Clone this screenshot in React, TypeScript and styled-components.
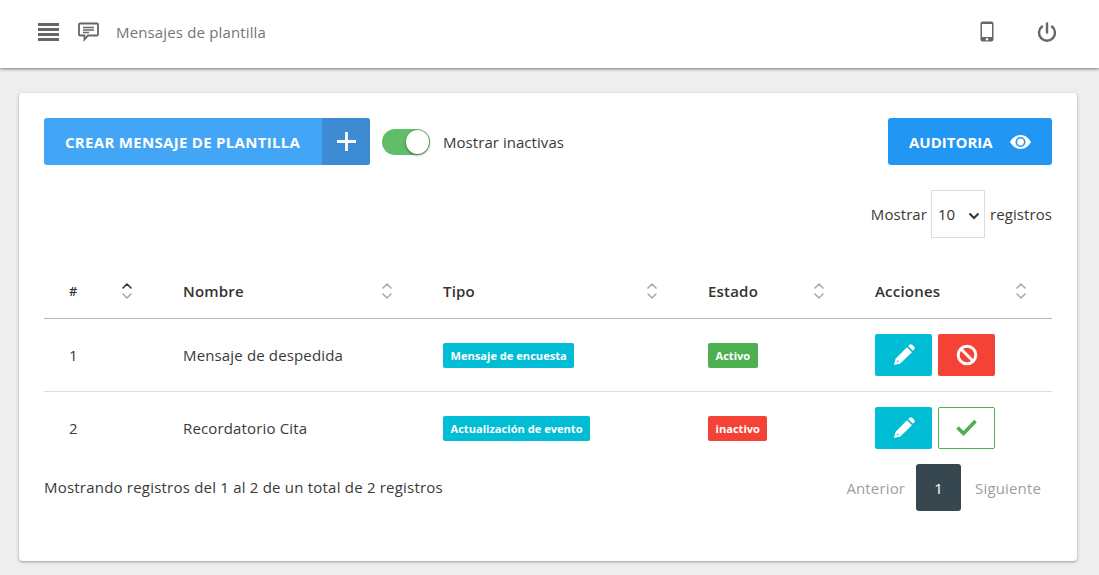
import React from "react";
import styled, { createGlobalStyle } from "styled-components";

const Global = createGlobalStyle`
  html, body { margin: 0; padding: 0; background: #eeeeee; }
  body { font-family: "Open Sans", "Noto Sans", sans-serif; font-size: 15px; color: #333; }
  * { box-sizing: border-box; }
`;

const Page = styled.div`
  width: 1099px;
  height: 575px;
  overflow: hidden;
  background: #eeeeee;
`;
const Header = styled.header`
  height: 68px;
  background: #fff;
  box-shadow: 0 1px 3px rgba(0, 0, 0, 0.5);
  display: flex;
  align-items: center;
  padding: 0 42px 0 38px;
  color: #666;
`;
const HeaderTitle = styled.span`
  font-size: 15px;
  letter-spacing: 0.15px;
  color: #757575;
  margin: -4px 0 0 17px;
  flex: 1;
`;
const IconSlot = styled.span<{ $ml?: number }>`
  display: inline-flex;
  margin-left: ${(p) => p.$ml ?? 0}px;
  margin-top: -5px;
`;
const Card = styled.main`
  margin: 25px 22px 0 19px;
  height: 468px;
  background: #fff;
  border-radius: 4px;
  box-shadow: 0 1px 3px rgba(0, 0, 0, 0.35);
  padding: 25px;
`;
const TopRow = styled.div`
  display: flex;
  align-items: center;
  height: 47px;
`;
const Button = styled.button<{ $bg: string }>`
  height: 47px;
  border: 0;
  border-radius: 3px;
  background: ${(p) => p.$bg};
  color: #fff;
  font: 700 15px "Open Sans", sans-serif;
  display: flex;
  align-items: center;
  padding: 0;
  overflow: hidden;
`;
const ButtonLabel = styled.span`
  width: 278px;
  padding-left: 21px;
  letter-spacing: 0.3px;
  text-align: left;
`;
const PlusBox = styled.span`
  width: 48px;
  height: 47px;
  background: #3d8bd3;
  display: flex;
  align-items: center;
  justify-content: center;
`;
const Toggle = styled.span`
  width: 48px;
  height: 26px;
  border-radius: 13px;
  background: #62bd69;
  margin-left: 12px;
  position: relative;
  display: inline-block;
`;
const Knob = styled.span`
  position: absolute;
  right: 1px;
  top: 1px;
  width: 23px;
  height: 24px;
  border-radius: 50%;
  background: #fff;
  box-shadow: 0 1px 3px rgba(0, 0, 0, 0.45);
`;
const ToggleLabel = styled.span`
  margin-left: 13px;
  font-size: 15px;
  letter-spacing: 0.05px;
  color: #3a3a3a;
  flex: 1;
`;
const AuditBtn = styled(Button)`
  width: 164px;
  justify-content: flex-start;
  padding-left: 21px;
  gap: 17px;
`;
const LengthRow = styled.div`
  display: flex;
  justify-content: flex-end;
  align-items: center;
  gap: 4px;
  margin-top: 25px;
  height: 48px;
  font-size: 15px;
  letter-spacing: 0.08px;
  color: #3a3a3a;
`;
const Select = styled.select`
  width: 54px;
  height: 48px;
  margin-right: 1px;
  appearance: none;
  background: #fff url("data:image/svg+xml,%3Csvg xmlns='http://www.w3.org/2000/svg' width='12' height='8' viewBox='0 0 12 8'%3E%3Cpath d='M1.500 1.500L6 6l4.500-4.500' fill='none' stroke='%23333' stroke-width='2'/%3E%3C/svg%3E") no-repeat 36px 21px;
  border: 1px solid #dddddd;
  border-radius: 0;
  font: 15px "Open Sans", sans-serif;
  color: #333;
  padding: 0 0 0 6px;
`;
const Table = styled.table`
  width: 1008px;
  margin-top: 25px;
  border-collapse: collapse;
  table-layout: fixed;
`;
const Col = styled.col<{ $w: number }>`
  width: ${(p) => p.$w}px;
`;
const Th = styled.th`
  height: 55px;
  padding: 2px 0 0 25px;
  text-align: left;
  font-weight: 600;
  color: #333;
  border-bottom: 1px solid #b5b5b5;
`;
const ThInner = styled.div<{ $small?: boolean }>`
  display: flex;
  align-items: center;
  justify-content: space-between;
  padding-right: 25px;
  font-size: ${(p) => (p.$small ? "13px" : "15px")};
  letter-spacing: 0.2px;
`;
const Td = styled.td`
  height: 73px;
  padding: 0 0 0 25px;
  font-size: 15px;
  letter-spacing: 0.15px;
  color: #3a3a3a;
  border-bottom: 1px solid #dddddd;
  tr:last-child > & {
    border-bottom: 0;
  }
`;
const Badge = styled.span<{ $bg: string }>`
  display: block;
  width: fit-content;
  margin-top: 1px;
  background: ${(p) => p.$bg};
  color: #fff;
  font-size: 11.1px;
  letter-spacing: 0;
  font-weight: 700;
  line-height: 25px;
  height: 25px;
  padding: 0 7.5px;
  border-radius: 2px;
`;
const Actions = styled.div`
  display: flex;
  gap: 6px;
`;
const ActionBtn = styled.button<{ $bg: string; $border?: string }>`
  width: 57px;
  height: 42px;
  border-radius: 2px;
  background: ${(p) => p.$bg};
  border: ${(p) => (p.$border ? `1px solid ${p.$border}` : "0")};
  display: flex;
  align-items: center;
  justify-content: center;
  padding: 0;
`;
const Footer = styled.div`
  display: flex;
  justify-content: space-between;
  align-items: flex-start;
`;
const Info = styled.div`
  font-size: 15px;
  letter-spacing: 0.21px;
  color: #3a3a3a;
  padding-top: 13px;
`;
const Pager = styled.div`
  display: flex;
  align-items: center;
  height: 47px;
  font-size: 15px;
  letter-spacing: 0.15px;
  color: #9e9e9e;
  padding-right: 11px;
`;
const PageNum = styled.span`
  width: 45px;
  height: 47px;
  margin: 0 14px 0 11px;
  background: #37474f;
  color: #fff;
  border-radius: 3px;
  display: flex;
  align-items: center;
  justify-content: center;
`;

const Sort = ({ active }: { active?: boolean }) => (
  <svg width="12" height="20" viewBox="0 0 12 20" fill="none" strokeWidth="1.6" strokeLinecap="round" strokeLinejoin="round">
    <path d="M2 7l4-4 4 4" stroke={active ? "#333" : "#aaa"} />
    <path d="M2 13l4 4 4-4" stroke="#aaa" />
  </svg>
);
const Pencil = () => (
  <svg width="22" height="22" viewBox="0 0 22 22" fill="#fff">
    <path d="M1 21l1.6-6.3L14 3.3l5 5L7.3 19.6z" />
    <path d="M15.2 2.1l1-1a2.4 2.4 0 0 1 3.3 0l1.400 1.400a2.400 2.400 0 0 1 0 3.300l-1 1z" />
    <path d="M4 15.500l2.500 2.500-3 .8z" fill="#00bcd4" opacity=".55" />
  </svg>
);

const rows = [
  { n: 1, name: "Mensaje de despedida", tipo: "Mensaje de encuesta", estado: "Activo", on: true },
  { n: 2, name: "Recordatorio Cita", tipo: "Actualización de evento", estado: "inactivo", on: false },
];

export default function App() {
  return (
    <Page>
      <Global />
      <Header>
        <IconSlot>
          <svg width="21" height="20" viewBox="0 0 21 20" fill="#666">
            <rect y="1" width="21" height="3" />
            <rect y="6" width="21" height="3" />
            <rect y="11" width="21" height="3" />
            <rect y="16" width="21" height="3" />
          </svg>
        </IconSlot>
        <IconSlot $ml={19}>
          <svg width="21" height="20" viewBox="0 0 21 20" fill="none" stroke="#666" strokeWidth="1.800">
            <path d="M2 1.500h17a1 1 0 0 1 1 1v10a1 1 0 0 1-1 1H10l-3.500 4v-4H2a1 1 0 0 1-1-1v-10a1 1 0 0 1 1-1z" />
            <path d="M5 5.500h11M5 8h11M5 10.500h6" strokeWidth="1.300" />
          </svg>
        </IconSlot>
        <HeaderTitle>Mensajes de plantilla</HeaderTitle>
        <IconSlot>
          <svg width="14" height="21" viewBox="0 0 14 21">
            <rect x="0.500" y="0.500" width="13" height="20" rx="2" fill="#666" />
            <rect x="2" y="3" width="10" height="13" fill="#fff" />
            <circle cx="7" cy="18.300" r="1.200" fill="#fff" />
          </svg>
        </IconSlot>
        <IconSlot $ml={43}>
          <svg width="20" height="20" viewBox="0 0 20 20" fill="none" stroke="#666" strokeWidth="2.400" strokeLinecap="round">
            <path d="M10 1.500v9" />
            <path d="M5 4.500a8 8 0 1 0 10 0" />
          </svg>
        </IconSlot>
      </Header>
      <Card>
        <TopRow>
          <Button $bg="#42a5f5">
            <ButtonLabel>CREAR MENSAJE DE PLANTILLA</ButtonLabel>
            <PlusBox>
              <svg width="19" height="19" viewBox="0 0 19 19" stroke="#fff" strokeWidth="2.800">
                <path d="M9.500 0v19M0 9.500h19" />
              </svg>
            </PlusBox>
          </Button>
          <Toggle>
            <Knob />
          </Toggle>
          <ToggleLabel>Mostrar inactivas</ToggleLabel>
          <AuditBtn $bg="#2196f3">
            AUDITORIA
            <svg width="21" height="14" viewBox="0 0 21 14">
              <path fill="#fff" fillRule="evenodd" d="M10.500 0C6 0 2.200 2.800 0 7c2.200 4.200 6 7 10.500 7S18.800 11.200 21 7C18.800 2.800 15 0 10.500 0zm0 2a5 5 0 1 1 0 10 5 5 0 0 1 0-10z" />
              <circle cx="10.500" cy="7" r="3.400" fill="#fff" />
            </svg>
          </AuditBtn>
        </TopRow>
        <LengthRow>
          Mostrar
          <Select defaultValue="10">
            <option>10</option>
            <option>25</option>
          </Select>
          registros
        </LengthRow>
        <Table>
          <colgroup>
            <Col $w={114} />
            <Col $w={260} />
            <Col $w={265} />
            <Col $w={167} />
            <Col $w={202} />
          </colgroup>
          <thead>
            <tr>
              <Th><ThInner $small>#<Sort active /></ThInner></Th>
              <Th><ThInner>Nombre<Sort /></ThInner></Th>
              <Th><ThInner>Tipo<Sort /></ThInner></Th>
              <Th><ThInner>Estado<Sort /></ThInner></Th>
              <Th><ThInner>Acciones<Sort /></ThInner></Th>
            </tr>
          </thead>
          <tbody>
            {rows.map((r) => (
              <tr key={r.n}>
                <Td>{r.n}</Td>
                <Td>{r.name}</Td>
                <Td><Badge $bg="#00bcd4">{r.tipo}</Badge></Td>
                <Td><Badge $bg={r.on ? "#4caf50" : "#f44336"}>{r.estado}</Badge></Td>
                <Td>
                  <Actions>
                    <ActionBtn $bg="#00bcd4"><Pencil /></ActionBtn>
                    {r.on ? (
                      <ActionBtn $bg="#f44336">
                        <svg width="22" height="22" viewBox="0 0 22 22" fill="none" stroke="#fff" strokeWidth="3">
                          <circle cx="11" cy="11" r="8.800" />
                          <path d="M5 5l12 12" />
                        </svg>
                      </ActionBtn>
                    ) : (
                      <ActionBtn $bg="#fff" $border="#4caf50">
                        <svg width="21" height="17" viewBox="0 0 21 17" fill="none" stroke="#4caf50" strokeWidth="3.600">
                          <path d="M1.500 8.500l6 6L19.500 2" />
                        </svg>
                      </ActionBtn>
                    )}
                  </Actions>
                </Td>
              </tr>
            ))}
          </tbody>
        </Table>
        <Footer>
          <Info>Mostrando registros del 1 al 2 de un total de 2 registros</Info>
          <Pager>
            Anterior
            <PageNum>1</PageNum>
            Siguiente
          </Pager>
        </Footer>
      </Card>
    </Page>
  );
}
